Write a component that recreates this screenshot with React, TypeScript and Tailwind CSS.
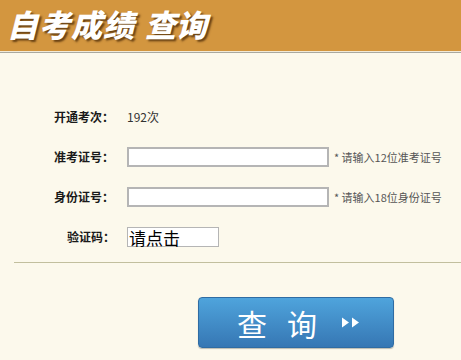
import React from 'react'

const cjk = { fontFamily: '"Noto Sans CJK SC", "Noto Sans", sans-serif' }

function Row({ label, indent, children }: { label: string; indent: string; children: React.ReactNode }) {
  return (
    <div className="flex items-center h-5">
      <div className={`${indent} text-[12px] font-bold text-[#1a1a1a] whitespace-nowrap`}>{label}</div>
      {children}
    </div>
  )
}

export default function App() {
  return (
    <div className="w-[461px] h-[360px] overflow-hidden bg-[#fcf9ec]" style={cjk}>
      <div className="h-[51px] bg-[#d3963f] flex items-center pl-[7px]">
        <h1 className="flex text-[31px] leading-none font-black italic text-white [text-shadow:2px_2px_2px_rgba(60,30,0,0.7)] -mt-[4px]">
          <span className="tracking-[1px]">自考成绩</span>
          <span className="ml-[10px]">查询</span>
        </h1>
      </div>
      <div className="h-[2px] bg-[#f3ead6] border-b border-[#a9a9a0]" />

      <div className="flex flex-col gap-5 mt-[54px]">
        <Row label="开通考次：" indent="pl-[54px] w-[127px]">
          <span className="text-[12px] text-[#333]">192次</span>
        </Row>
        <Row label="准考证号：" indent="pl-[54px] w-[127px]">
          <div className="w-[202px] h-5 bg-white border-2 border-[#b5b5b5]" />
          <span className="ml-[5px] text-[11px] text-[#555]">* 请输入12位准考证号</span>
        </Row>
        <Row label="身份证号：" indent="pl-[54px] w-[127px]">
          <div className="w-[202px] h-5 bg-white border-2 border-[#b5b5b5]" />
          <span className="ml-[5px] text-[11px] text-[#555]">* 请输入18位身份证号</span>
        </Row>
        <Row label="验证码：" indent="pl-[67px] w-[127px]">
          <div className="w-[92px] h-5 bg-white border border-[#b5b5b5] flex items-center pl-[1px]">
            <span className="text-[17px] leading-none text-black">请点击</span>
          </div>
        </Row>
      </div>

      <div className="ml-[14px] mt-[15px] h-px bg-[#c2bf9e]" />

      <div className="flex mt-[34px] ml-[198px]">
        <button className="w-[196px] h-[51px] rounded-[4px] border border-[#2f6ca3] bg-gradient-to-b from-[#4fa4dc] to-[#3677b4] flex items-center text-white shadow-[0_1px_1px_rgba(0,0,0,0.25)]">
          <span className="ml-[38px] text-[30px] leading-none tracking-[20px]">查询</span>
          <svg className="ml-[5px]" width="19" height="11" viewBox="0 0 19 11" fill="white">
            <polygon points="0,0.5 7,5.5 0,10.5" />
            <polygon points="10,0.5 17,5.5 10,10.5" />
          </svg>
        </button>
      </div>
    </div>
  )
}
